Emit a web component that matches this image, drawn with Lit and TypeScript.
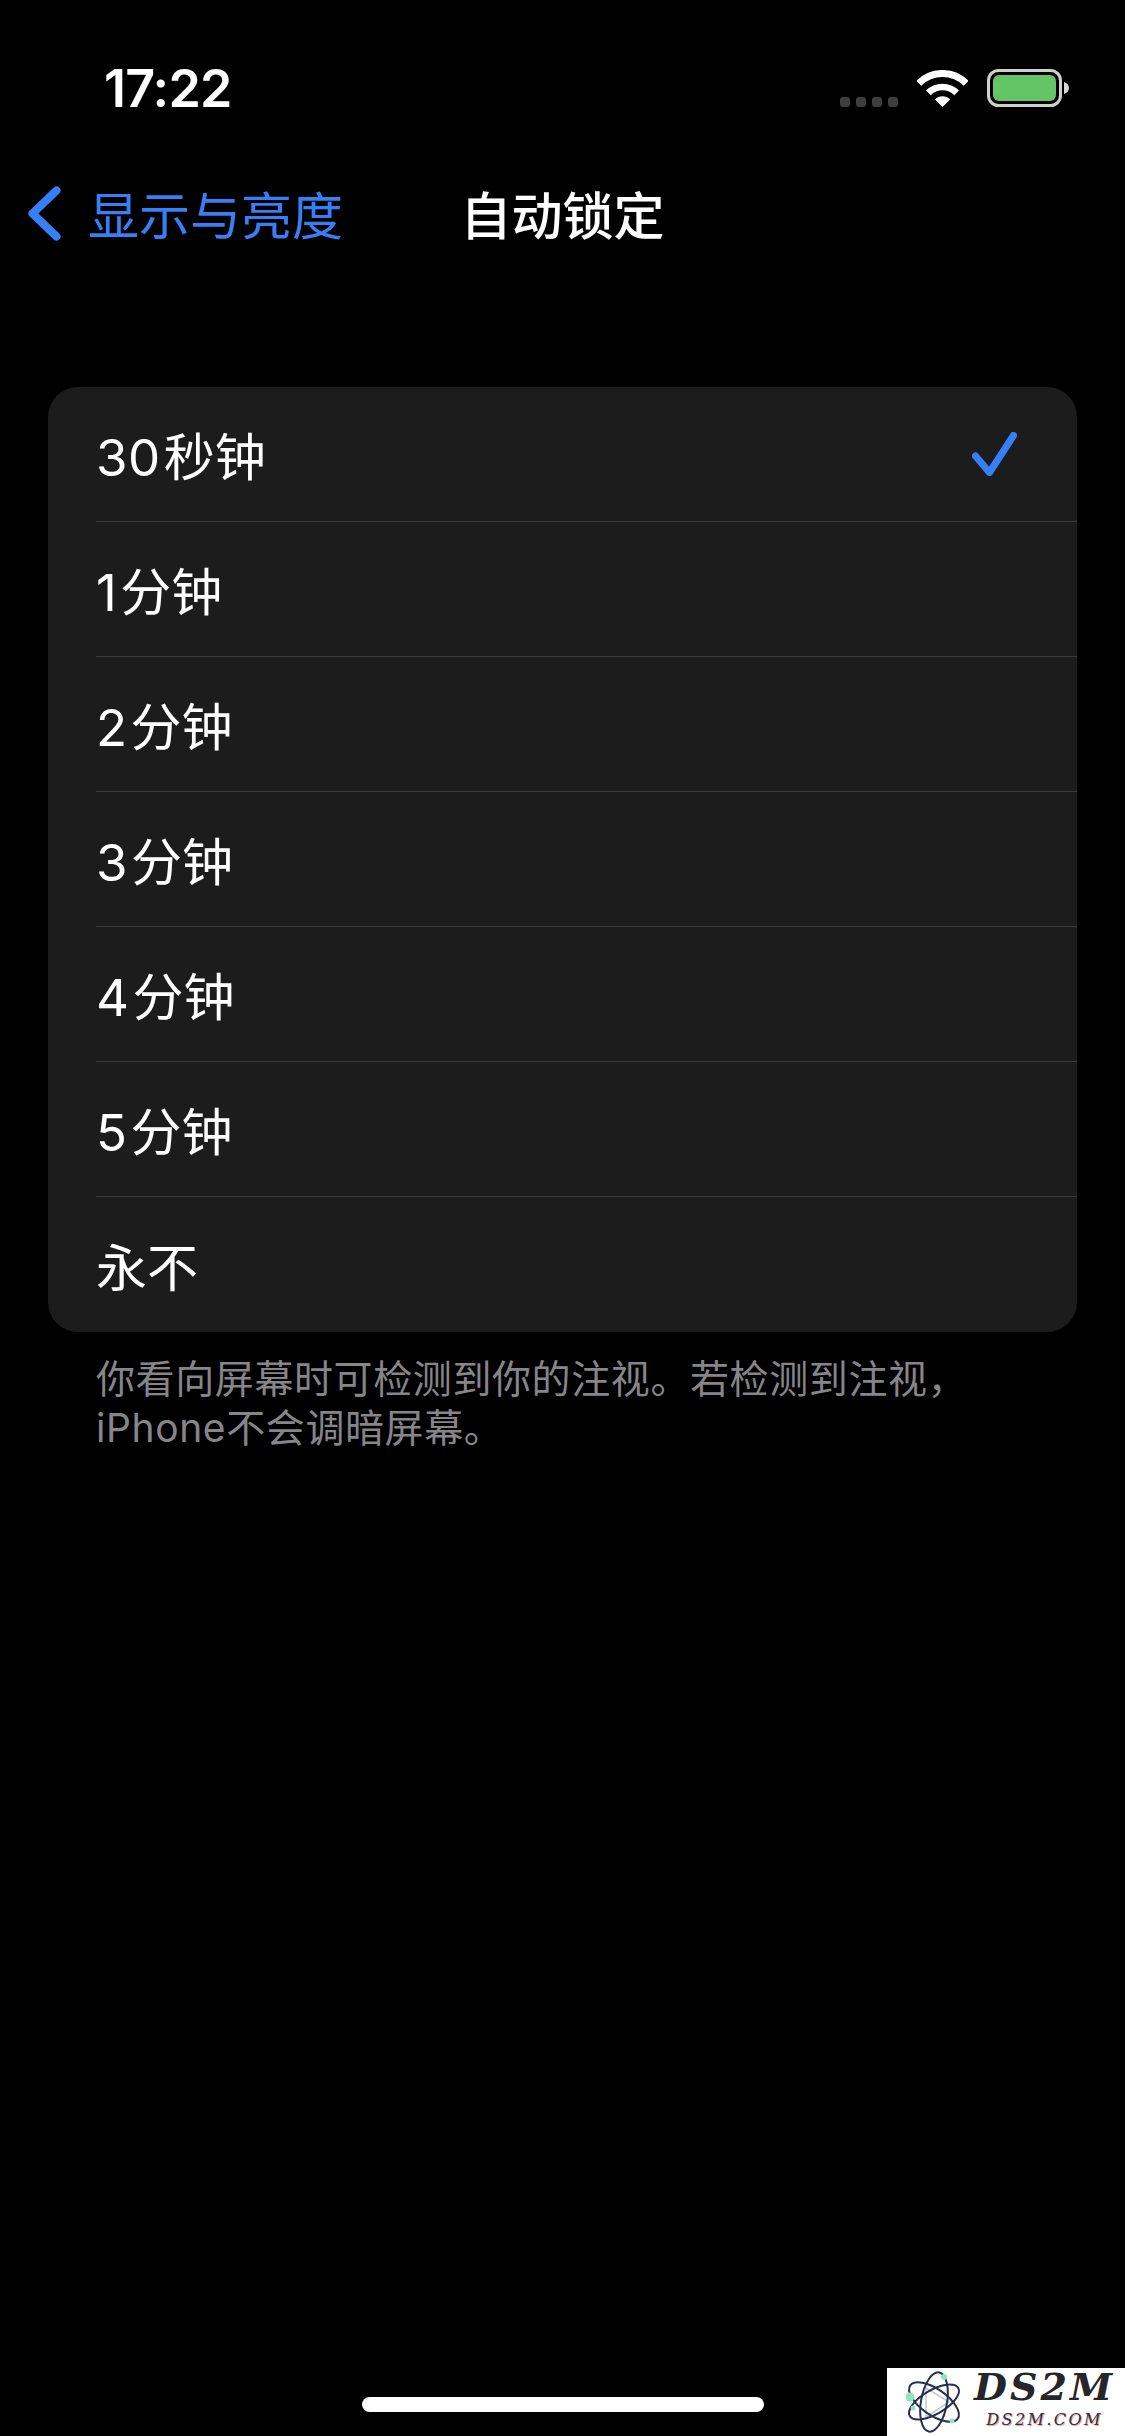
import { LitElement, html, css } from "lit";
import { customElement } from "lit/decorators.js";

const OPTIONS: [string, string][] = [
  ["30", "秒钟"],
  ["1", "分钟"],
  ["2", "分钟"],
  ["3", "分钟"],
  ["4", "分钟"],
  ["5", "分钟"],
  ["", "永不"],
];

@customElement("app-root")
export class AppRoot extends LitElement {
  static styles = css`
    :host {
      display: flex;
      flex-direction: column;
      position: relative;
      width: 1125px;
      height: 2436px;
      overflow: hidden;
      background: #000;
      color: #fff;
      font-family: "Inter", "Noto Sans CJK SC", sans-serif;
    }
    .status {
      display: flex;
      align-items: flex-end;
      height: 107px;
      padding: 0 56px 0 104px;
      box-sizing: border-box;
    }
    .time {
      font-size: 52px;
      line-height: 52px;
      font-weight: 600;
      letter-spacing: -0.8px;
      margin-bottom: -8px;
    }
    .indicators {
      display: flex;
      align-items: flex-end;
      gap: 19px;
      margin-left: auto;
    }
    .dots {
      display: flex;
      gap: 6px;
    }
    .dots i {
      width: 10px;
      height: 10px;
      border-radius: 3px;
      background: #3d3d3d;
    }
    svg {
      display: block;
    }
    .nav {
      display: grid;
      grid-template-columns: 1fr auto 1fr;
      align-items: center;
      height: 80px;
      margin-top: 66px;
    }
    .back {
      display: flex;
      align-items: center;
      gap: 27px;
      padding-left: 28px;
      color: #377ff6;
      font-size: 51px;
      font-weight: 400;
      white-space: nowrap;
    }
    .title {
      font-size: 51px;
      font-weight: 500;
      white-space: nowrap;
    }
    .card {
      margin: 134px 48px 0;
      border-radius: 30px;
      background: #1c1c1c;
      overflow: hidden;
    }
    .row {
      display: flex;
      align-items: center;
      justify-content: space-between;
      box-sizing: border-box;
      height: 135px;
      margin-left: 48px;
      padding: 0 60px 0 0;
      font-size: 51px;
      font-weight: 400;
      border-bottom: 1.5px solid #3c3c3c;
    }
    .row:last-child {
      border-bottom: none;
    }
    .num {
      letter-spacing: 0.5px;
      margin-right: 3px;
    }
    .note {
      margin: 22px 96px 0;
      color: #85858a;
      font-size: 39px;
      line-height: 49px;
      font-weight: 400;
      letter-spacing: 0.6px;
      white-space: nowrap;
    }
    .home {
      width: 402px;
      height: 15px;
      border-radius: 8px;
      background: #fff;
      margin: auto auto 24px;
    }
    .mark {
      position: absolute;
      right: 0;
      bottom: 0;
      width: 238px;
      height: 68px;
      background: #fff;
      display: flex;
    }
    .mark svg {
      flex: none;
      margin: 3px 0 0 17px;
    }
    .mark-text {
      flex: 1;
      display: flex;
      flex-direction: column;
      align-items: center;
      font-family: "DejaVu Serif", serif;
      font-style: italic;
      font-weight: 700;
      color: #26262a;
    }
    .mark-big {
      font-size: 38px;
      line-height: 36px;
      letter-spacing: 3px;
      margin-top: 1px;
    }
    .mark-small {
      font-size: 16px;
      line-height: 18px;
      letter-spacing: 2.4px;
      margin-top: 6px;
      color: #33304a;
      font-weight: 400;
      text-shadow: 1px 1px 1px #d99a8a;
    }
  `;

  render() {
    return html`
      <div class="status" lang="zh-CN">
        <div class="time">17:22</div>
        <div class="indicators">
          <div class="dots"><i></i><i></i><i></i><i></i></div>
          <svg width="51" height="37" viewBox="0 0 51 37" fill="none">
            <path d="M1.8 13.3A33.5 33.5 0 0 1 49.2 13.3" stroke="#fff" stroke-width="7" />
            <path d="M11.36 22.86A20 20 0 0 1 39.64 22.86" stroke="#fff" stroke-width="6.6" />
            <path d="M25.5 37L17.9 29.4A10.7 10.7 0 0 1 33.1 29.4Z" fill="#fff" />
          </svg>
          <svg width="82" height="38" viewBox="0 0 82 38" fill="none">
            <rect x="1.5" y="1.5" width="72" height="35" rx="10" stroke="#cfcfcf" stroke-width="3" />
            <rect x="6" y="6" width="63" height="26" rx="6" fill="#65c466" />
            <path d="M77 13C80 14 82 16 82 19C82 22 80 24 77 25Z" fill="#d8d8d8" />
          </svg>
        </div>
      </div>
      <div class="nav" lang="zh-CN">
        <div class="back">
          <svg width="33" height="55" viewBox="0 0 33 55" fill="none">
            <path d="M28.5 4.5L4.5 27.5L28.5 50.5" stroke="#377ff6" stroke-width="8" stroke-linecap="round" stroke-linejoin="round" />
          </svg>
          <span>显示与亮度</span>
        </div>
        <div class="title">自动锁定</div>
        <div></div>
      </div>
      <div class="card" lang="zh-CN">
        ${OPTIONS.map(
          ([n, u], i) => html`<div class="row">
            <span>${n ? html`<span class="num">${n}</span>` : ""}${u}</span>
            ${i === 0
              ? html`<svg width="45" height="44" viewBox="0 0 45 44" fill="none">
                  <path d="M3.5 24L17.5 40.5L41.5 3.5" stroke="#377ff6" stroke-width="7" stroke-linecap="round" stroke-linejoin="round" />
                </svg>`
              : ""}
          </div>`
        )}
      </div>
      <div class="note" lang="zh-CN">你看向屏幕时可检测到你的注视。若检测到注视，<br />iPhone不会调暗屏幕。</div>
      <div class="home"></div>
      <div class="mark">
        <svg width="60" height="62" viewBox="0 0 60 62" fill="none">
          <path d="M22 17L45 31L22 46Z" stroke="#c4c8d0" stroke-width="1.5" />
          <ellipse cx="30" cy="31" rx="29" ry="13" transform="rotate(35 30 31)" stroke="#27304f" stroke-width="2" />
          <ellipse cx="30" cy="31" rx="30" ry="13" transform="rotate(100 30 31)" stroke="#27304f" stroke-width="2" />
          <ellipse cx="30" cy="31" rx="28" ry="12" transform="rotate(-30 30 31)" stroke="#27304f" stroke-width="2" />
          <circle cx="40" cy="6" r="3" fill="#8fe6b8" />
          <circle cx="6" cy="26" r="4.5" fill="#8fe6b8" />
          <circle cx="9" cy="37" r="2.5" fill="#8fe6b8" />
          <circle cx="48" cy="50" r="2.5" fill="#8fe6b8" />
        </svg>
        <div class="mark-text">
          <div class="mark-big">DS2M</div>
          <div class="mark-small">DS2M.COM</div>
        </div>
      </div>
    `;
  }
}
